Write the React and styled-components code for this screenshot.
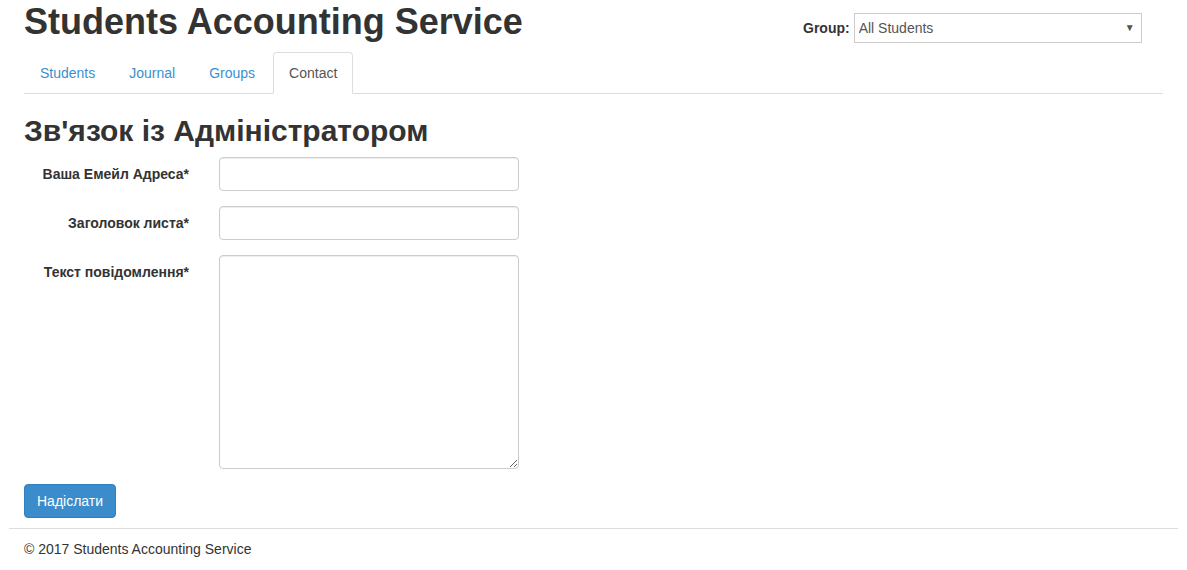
import React from "react";
import styled, { createGlobalStyle } from "styled-components";

const GlobalStyle = createGlobalStyle`
  html, body {
    margin: 0;
    padding: 0;
    background: #fff;
  }
  body {
    font-family: "Liberation Sans", Arial, sans-serif;
    font-size: 14px;
    line-height: 20px;
    color: #333;
  }
  * {
    box-sizing: border-box;
  }
`;

const Page = styled.div`
  margin: 0 9px;
`;

const Inner = styled.div`
  padding: 0 15px;
`;

const Header = styled.div`
  display: grid;
  grid-template-columns: 1fr 360px;
  column-gap: 30px;
`;

const Title = styled.h1`
  margin: 2px 0 10px;
  font-size: 36px;
  line-height: 39.6px;
  font-weight: bold;
  color: #333;
`;

const GroupBox = styled.div`
  display: flex;
  align-items: center;
  margin-top: 13px;
  height: 30px;
`;

const GroupLabel = styled.label`
  font-weight: bold;
  margin-right: 4px;
`;

const SelectWrap = styled.div`
  display: flex;
  align-items: center;
  width: 288px;
  height: 30px;
  border: 1px solid #ccc;
  background: #fff;
  padding: 0 6px 0 4px;
`;

const Select = styled.select`
  flex: 1;
  appearance: none;
  border: 0;
  background: transparent;
  font-family: inherit;
  font-size: 14px;
  color: #555;
  outline: none;
  padding: 0;
`;

const Arrow = styled.span`
  font-size: 10px;
  color: #555;
`;

const Tabs = styled.ul`
  display: flex;
  list-style: none;
  margin: 0;
  padding: 0;
  border-bottom: 1px solid #ddd;
`;

const Tab = styled.li`
  margin-bottom: -1px;
`;

const TabLink = styled.a`
  display: block;
  margin-right: 2px;
  padding: 10px 15px;
  line-height: 20px;
  border: 1px solid ${(p) => (p.active ? "#ddd" : "transparent")};
  border-bottom-color: ${(p) => (p.active ? "#fff" : "transparent")};
  border-radius: 4px 4px 0 0;
  background: ${(p) => (p.active ? "#fff" : "transparent")};
  color: ${(p) => (p.active ? "#555" : "#3b8fd1")};
  text-decoration: none;
  cursor: ${(p) => (p.active ? "default" : "pointer")};
`;

const Heading = styled.h2`
  margin: 20px 0 10px;
  font-size: 30px;
  line-height: 33px;
  font-weight: bold;
  color: #333;
`;

const FormGroup = styled.div`
  display: flex;
  align-items: flex-start;
  margin-bottom: 15px;
`;

const Label = styled.label`
  width: 165px;
  margin-right: 30px;
  padding-top: 7px;
  text-align: right;
  font-weight: bold;
`;

const Input = styled.input`
  width: 300px;
  height: 34px;
  padding: 6px 12px;
  font-family: inherit;
  font-size: 14px;
  color: #555;
  border: 1px solid #ccc;
  border-radius: 4px;
  box-shadow: inset 0 1px 1px rgba(0, 0, 0, 0.075);
  outline: none;
`;

const TextArea = styled.textarea`
  width: 300px;
  height: 214px;
  padding: 6px 12px;
  font-family: inherit;
  font-size: 14px;
  color: #555;
  border: 1px solid #ccc;
  border-radius: 4px;
  box-shadow: inset 0 1px 1px rgba(0, 0, 0, 0.075);
  outline: none;
  display: block;
`;

const Button = styled.button`
  height: 34px;
  padding: 6px 12px;
  font-family: inherit;
  font-size: 14px;
  line-height: 20px;
  color: #fff;
  background: #3b8cca;
  border: 1px solid #357ebd;
  border-radius: 4px;
  cursor: pointer;
`;

const Rule = styled.hr`
  margin: 10px 0;
  border: 0;
  border-top: 1px solid #ddd;
`;

const Footer = styled.footer`
  padding: 0 15px;
`;

const tabs = ["Students", "Journal", "Groups", "Contact"];

const App = () => {
  return (
    <Page>
      <GlobalStyle />
      <Inner>
        <Header>
          <Title>Students Accounting Service</Title>
          <GroupBox>
            <GroupLabel>Group:</GroupLabel>
            <SelectWrap>
              <Select defaultValue="all">
                <option value="all">All Students</option>
              </Select>
              <Arrow>▼</Arrow>
            </SelectWrap>
          </GroupBox>
        </Header>
        <Tabs>
          {tabs.map((t) => (
            <Tab key={t}>
              <TabLink active={t === "Contact" ? 1 : 0}>{t}</TabLink>
            </Tab>
          ))}
        </Tabs>
        <Heading>Зв'язок із Адміністратором</Heading>
        <form onSubmit={(e) => e.preventDefault()}>
          <FormGroup>
            <Label>Ваша Емейл Адреса*</Label>
            <Input type="email" />
          </FormGroup>
          <FormGroup>
            <Label>Заголовок листа*</Label>
            <Input type="text" />
          </FormGroup>
          <FormGroup>
            <Label>Текст повідомлення*</Label>
            <TextArea />
          </FormGroup>
          <Button type="submit">Надіслати</Button>
        </form>
      </Inner>
      <Rule />
      <Footer>© 2017 Students Accounting Service</Footer>
    </Page>
  );
};

export default App;
